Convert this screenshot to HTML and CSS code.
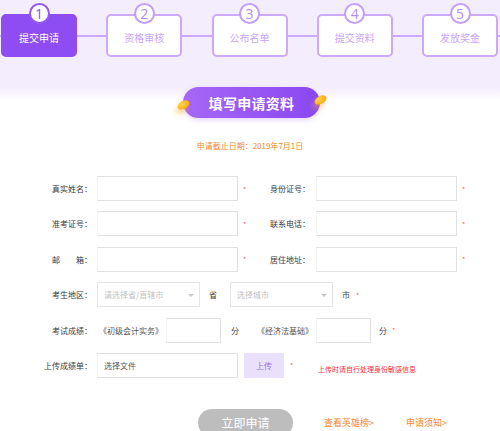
FILE: index.html
```html
<!DOCTYPE html>
<html lang="zh">
<head>
<meta charset="utf-8">
<title>填写申请资料</title>
<link rel="stylesheet" href="styles.css">
</head>
<body>
<div class="hero">
  <div class="steps">
    <span class="conn conn-lead"></span>
    <div class="step active"><span class="num">1</span>提交申请</div>
    <span class="conn"></span>
    <div class="step"><span class="num">2</span>资格审核</div>
    <span class="conn"></span>
    <div class="step"><span class="num">3</span>公布名单</div>
    <span class="conn"></span>
    <div class="step"><span class="num">4</span>提交资料</div>
    <span class="conn"></span>
    <div class="step"><span class="num">5</span>发放奖金</div>
    <span class="conn conn-trail"></span>
  </div>
  <div class="banner-wrap">
    <div class="banner">
      <span class="coin coin-left"></span>
      填写申请资料
      <span class="coin coin-right"></span>
    </div>
  </div>
</div>

<p class="deadline">申请截止日期：2019年7月1日</p>

<div class="form">
  <div class="row">
    <label class="lbl">真实姓名：</label>
    <span class="inp wide"></span>
    <span class="star">*</span>
    <label class="lbl2">身份证号：</label>
    <span class="inp wide r"></span>
    <span class="star">*</span>
  </div>
  <div class="row">
    <label class="lbl">准考证号：</label>
    <span class="inp wide"></span>
    <span class="star">*</span>
    <label class="lbl2">联系电话：</label>
    <span class="inp wide r"></span>
    <span class="star">*</span>
  </div>
  <div class="row">
    <label class="lbl">邮&emsp;&emsp;箱：</label>
    <span class="inp wide"></span>
    <span class="star">*</span>
    <label class="lbl2">居住地址：</label>
    <span class="inp wide r"></span>
    <span class="star">*</span>
  </div>
  <div class="row">
    <label class="lbl">考生地区：</label>
    <span class="sel sel1">请选择省/直辖市<i class="arrow"></i></span>
    <span class="unit u-prov">省</span>
    <span class="sel sel2">选择城市<i class="arrow"></i></span>
    <span class="unit u-city">市</span>
    <span class="star s-city">*</span>
  </div>
  <div class="row">
    <label class="lbl">考试成绩：</label>
    <span class="subj s1">《初级会计实务》</span>
    <span class="inp score"></span>
    <span class="unit u-fen">分</span>
    <span class="subj s2">《经济法基础》</span>
    <span class="inp score"></span>
    <span class="unit u-fen2">分</span>
    <span class="star">*</span>
  </div>
  <div class="row">
    <label class="lbl">上传成绩单：</label>
    <span class="inp wide file">选择文件</span>
    <span class="upload">上传</span>
    <span class="star s-up">*</span>
    <span class="note">上传时请自行处理身份敏感信息</span>
  </div>
</div>

<div class="actions">
  <span class="submit">立即申请</span>
  <a class="link l1">查看英雄榜&gt;</a>
  <a class="link l2">申请须知&gt;</a>
</div>
</body>
</html>
```

FILE: styles.css
```css
* { box-sizing: border-box; }
html, body { margin: 0; padding: 0; }
body {
  width: 500px;
  height: 431px;
  overflow: hidden;
  background: #fff;
  font-family: "Noto Sans CJK SC", "Liberation Sans", sans-serif;
  color: #333;
}

.hero {
  background: linear-gradient(to bottom, #f4edfe 0, #f4edfe 88px, #ffffff 100px);
  padding-top: 14px;
  height: 119px;
}

.steps {
  display: flex;
  align-items: center;
  height: 43px;
}
.conn {
  flex: 1;
  height: 2px;
  background: #cba9fb;
}
.conn-lead { flex: 0 0 1px; }
.conn-trail { flex: 0 0 2px; }

.step {
  position: relative;
  width: 76px;
  height: 43px;
  border: 2px solid #cba9fb;
  border-radius: 5px;
  background: #fff;
  color: #c9a6f8;
  font-size: 10px;
  display: flex;
  align-items: center;
  justify-content: center;
  padding-top: 3px;
}
.step.active {
  background: #8d4df2;
  border-color: #8d4df2;
  color: #fff;
}
.num {
  position: absolute;
  left: 50%;
  top: -13px;
  width: 21px;
  height: 21px;
  margin-left: -10.5px;
  border-radius: 50%;
  border: 2px solid #c49ffa;
  background: #fff;
  color: #b58cf6;
  font-family: "Open Sans", "Liberation Sans", sans-serif;
  font-size: 14px;
  line-height: 17px;
  text-align: center;
}
.step.active .num {
  border-color: #9459f3;
  color: #8d4df2;
}

.banner-wrap {
  display: flex;
  justify-content: center;
  margin-top: 30px;
  padding-left: 3px;
}
.banner {
  position: relative;
  width: 137px;
  height: 31px;
  border-radius: 16px;
  background: linear-gradient(to right, #a767f6, #8a47f1);
  color: #fff;
  font-size: 14px;
  font-weight: bold;
  letter-spacing: 0.3px;
  display: flex;
  align-items: center;
  justify-content: center;
  box-shadow: 0 2px 5px rgba(150, 90, 240, 0.25);
}
.coin {
  position: absolute;
  width: 13px;
  height: 8px;
  border-radius: 50%;
  background: radial-gradient(ellipse at 40% 35%, #ffd34a 0, #fbb51c 55%, #f29a10 100%);
  transform: rotate(-28deg);
  box-shadow: -4px 3px 5px rgba(250, 180, 40, 0.45);
}
.coin-left { left: -6px; top: 14px; }
.coin-right { right: -7px; top: 9px; }

.deadline {
  margin: 21px 0 0;
  text-align: center;
  font-size: 8px;
  line-height: 12px;
  color: #f28a2a;
}

.form {
  margin-top: 24px;
}
.row {
  display: flex;
  align-items: center;
  height: 25px;
  margin-bottom: 10.4px;
  font-size: 8px;
}
.lbl {
  width: 92px;
  text-align: right;
  color: #3a3a3a;
}
.lbl2 {
  width: 61px;
  text-align: right;
  color: #3a3a3a;
}
.inp {
  height: 25px;
  border: 1px solid #e1e1e1;
  border-left-color: #f4f4f4;
  background: #fff;
}
.wide {
  width: 141px;
  margin-left: 5px;
}
.wide.r { margin-left: 6px; }
.star {
  color: #f26060;
  font-size: 7px;
  margin-left: 5px;
  width: 6px;
}

.sel {
  position: relative;
  height: 25px;
  width: 103px;
  border: 1px solid #e6e6e6;
  color: #c2c2c2;
  display: flex;
  align-items: center;
  padding-left: 6px;
}
.sel1 { margin-left: 5px; }
.sel2 { margin-left: 13px; }
.arrow {
  position: absolute;
  right: 5px;
  top: 11px;
  width: 0;
  height: 0;
  border-left: 3px solid transparent;
  border-right: 3px solid transparent;
  border-top: 3px solid #c8c8c8;
}
.unit { color: #444; }
.u-prov { margin-left: 9px; }
.u-city { margin-left: 9px; }
.s-city { margin-left: 6px; }

.subj { color: #555; }
.s1 { margin-left: 7px; }
.s2 { margin-left: 18px; }
.score {
  width: 55px;
  margin-left: 3px;
}
.u-fen { margin-left: 10px; }
.u-fen2 { margin-left: 8px; }

.file {
  color: #555;
  display: flex;
  align-items: center;
  padding-left: 6px;
}
.upload {
  width: 40px;
  height: 25px;
  margin-left: 6px;
  background: #e9e0f9;
  color: #9a6cf0;
  display: flex;
  align-items: center;
  justify-content: center;
}
.s-up { margin-left: 6px; }
.note {
  margin-left: 22px;
  margin-top: 8px;
  color: #f5303a;
  font-size: 7px;
}

.actions {
  display: flex;
  align-items: flex-start;
  margin-top: 31px;
}
.submit {
  margin-left: 198px;
  width: 95px;
  height: 28px;
  border-radius: 14px;
  background: #bdbdbd;
  color: #fff;
  font-size: 12px;
  display: flex;
  align-items: center;
  justify-content: center;
  flex-shrink: 0;
}
.link {
  color: #f5862a;
  font-size: 9px;
  margin-top: 7px;
}
.l1 { margin-left: 31px; }
.l2 { margin-left: 32px; }
```
